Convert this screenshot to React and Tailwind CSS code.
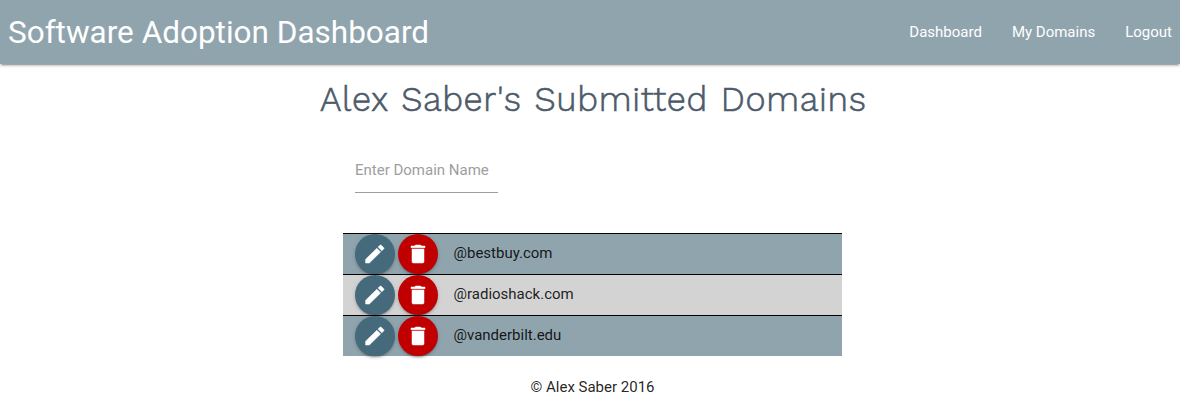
const domains = [
  { name: "@bestbuy.com", row: "bg-[#90a4ae]" },
  { name: "@radioshack.com", row: "bg-[#d3d3d3]" },
  { name: "@vanderbilt.edu", row: "bg-[#90a4ae]" },
];

const pencil =
  "M2.6 17.25V21h3.75L17.61 9.94l-3.75-3.75L2.6 17.25zM20.71 7.04a.996.996 0 0 0 0-1.41l-2.34-2.34a.996.996 0 0 0-1.41 0l-1.93 1.83 3.75 3.75 1.93-1.83z";
const trash = "M6 19.6c0 .8.4 1.4 1.2 1.4h9.6c.8 0 1.2-.6 1.2-1.4V7H6v12.6zM19 4h-3.5l-1-1h-5l-1 1H5v1.7h14V4z";

const shadow = "shadow-[0_2px_2px_0_rgba(0,0,0,0.14),0_1px_5px_0_rgba(0,0,0,0.12),0_3px_1px_-2px_rgba(0,0,0,0.2)]";

function RoundButton({ color, label, path }) {
  return (
    <button aria-label={label} className={`flex size-10 items-center justify-center rounded-full text-white ${color} ${shadow}`}>
      <svg viewBox="0 0 24 24" className="size-6 fill-current stroke-current stroke-[0.5]">
        <path d={path} />
      </svg>
    </button>
  );
}

export default function App() {
  return (
    <div className="h-[403px] overflow-hidden bg-white font-['Roboto',sans-serif] text-[15px] text-black/87">
      <nav className={`flex h-16 items-center justify-between bg-[#90a4ae] px-2 text-white ${shadow}`}>
        <span className="pt-px text-[31.5px] leading-16">Software Adoption Dashboard</span>
        <div className="flex gap-[30px]">
          <a>Dashboard</a>
          <a>My Domains</a>
          <a>Logout</a>
        </div>
      </nav>
      <h1 className="mt-[11px] pl-[320px] font-['Work_Sans','Open_Sans',sans-serif] text-[34.2px] leading-[48px] font-light tracking-[0.7px] [word-spacing:1.5px] whitespace-nowrap text-[#4c5a6a] [-webkit-text-stroke:0.6px_#4c5a6a]">
        Alex Saber's Submitted Domains
      </h1>
      <div className="mt-[25px] ml-[355px] h-[45px] w-[143px] border-b border-[#9e9e9e] leading-[45px] text-[#9e9e9e]">
        Enter Domain Name
      </div>
      <ul className="mt-10 ml-[343px] w-[499px]">
        {domains.map((d) => (
          <li key={d.name} className={`flex h-[41px] items-center border-t border-black pl-3 ${d.row}`}>
            <div className="flex gap-[3px]">
              <RoundButton color="bg-[#456a7c]" label="Edit" path={pencil} />
              <RoundButton color="bg-[#c00000]" label="Delete" path={trash} />
            </div>
            <span className="mb-0.5 ml-[15.5px]">{d.name}</span>
          </li>
        ))}
      </ul>
      <footer className="mt-5 pl-[530.5px] leading-[22px]">© Alex Saber 2016</footer>
    </div>
  );
}
